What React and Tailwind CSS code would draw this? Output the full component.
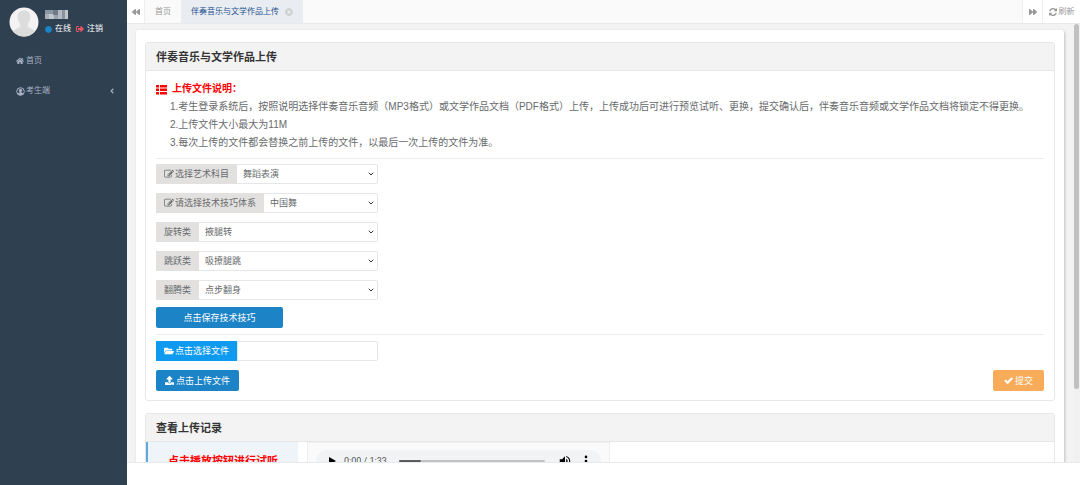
import React, { useState } from 'react';
import {
  FaAngleLeft,
  FaBackward,
  FaCircle,
  FaFolderOpen,
  FaForward,
  FaHome,
  FaSignOutAlt,
  FaTimesCircle,
  FaUpload,
} from 'react-icons/fa';
import { ChevronDown } from 'lucide-react';

const skillFields = [
  { id: 'subject', label: '选择艺术科目', icon: true, options: ['舞蹈表演'] },
  { id: 'system', label: '请选择技术技巧体系', icon: true, options: ['中国舞'] },
  { id: 'spin', label: '旋转类', options: ['掖腿转'] },
  { id: 'jump', label: '跳跃类', options: ['吸撩腿跳'] },
  { id: 'tumble', label: '翻腾类', options: ['点步翻身'] },
];

const EditIcon = () => (
  <svg viewBox="0 0 1792 1792" className="size-[10px]" fill="currentColor">
    <path d="M888 1184l116-116-152-152-116 116v56h96v96h56zm440-720q-16-16-33 1l-350 350q-17 17-1 33t33-1l350-350q17-17 1-33zm80 594v190q0 119-84.500 203.500t-203.500 84.500h-832q-119 0-203.500-84.500t-84.500-203.500v-832q0-119 84.500-203.500t203.500-84.500h832q63 0 117 25 15 7 18 23 3 17-9 29l-49 49q-14 14-32 8-23-6-45-6h-832q-66 0-113 47t-47 113v832q0 66 47 113t113 47h832q66 0 113-47t47-113v-126q0-13 9-22l64-64q15-15 35-7t20 29zm-96-738l288 288-672 672h-288v-288zm444 132l-92 92-288-288 92-92q28-28 68-28t68 28l152 152q28 28 28 68t-28 68z" />
  </svg>
);

const RefreshIcon = () => (
  <svg viewBox="128 128 1536 1536" className="size-2" fill="currentColor">
    <path d="M1639 1056q0 5-1 7-64 268-268 434.500t-478 166.500q-146 0-282.500-55t-243.500-157l-129 129q-19 19-45 19t-45-19-19-45v-448q0-26 19-45t45-19h448q26 0 45 19t19 45-19 45l-137 137q71 66 161 102t187 36q134 0 250-65t186-179q11-17 53-117 8-23 30-23h192q13 0 22.500 9.500t9.500 22.500zm25-800v448q0 26-19 45t-45 19h-448q-26 0-45-19t-19-45 19-45l138-138q-148-137-349-137-134 0-250 65t-186 179q-11 17-53 117-8 23-30 23h-199q-13 0-22.500-9.500t-9.500-22.500v-7q65-268 270-434.500t480-166.500q146 0 284 55.500t245 156.500l130-129q19-19 45-19t45 19 19 45z" />
  </svg>
);

const ListIcon = () => (
  <svg viewBox="0 0 11 11" className="size-[11px]" fill="currentColor">
    <rect x="0" y="1" width="3" height="2.500" />
    <rect x="4" y="1" width="7" height="2.500" />
    <rect x="0" y="4.500" width="3" height="2.500" />
    <rect x="4" y="4.500" width="7" height="2.500" />
    <rect x="0" y="8" width="3" height="2.500" />
    <rect x="4" y="8" width="7" height="2.500" />
  </svg>
);

const CheckIcon = () => (
  <svg viewBox="0 0 18 18" className="size-[9px]" fill="none" stroke="currentColor" strokeWidth="4.500">
    <path d="M2 8.500l5 5L16.500 4" />
  </svg>
);

const UserCircleIcon = () => (
  <svg viewBox="0 0 18 18" className="size-[9px]" fill="none" stroke="currentColor" strokeWidth="2">
    <circle cx="9" cy="9" r="7.6" />
    <circle cx="9" cy="7" r="3.400" fill="currentColor" stroke="none" />
    <path d="M3.6 14c.8-2.6 2.6-3.6 5.4-3.6s4.600 1 5.400 3.600C13 15.800 11 16.600 9 16.600S5 15.800 3.600 14z" fill="currentColor" stroke="none" />
  </svg>
);

const Avatar = () => (
  <svg viewBox="0 0 30 30" className="size-[30px] shrink-0" aria-label="avatar">
    <clipPath id="avatar-clip">
      <circle cx="15" cy="15" r="14.5" />
    </clipPath>
    <g clipPath="url(#avatar-clip)">
      <rect width="30" height="30" fill="#f4f2f3" />
      <path d="M15 3.500c4.200 0 6.400 2.800 6.200 6.600-.1 3-1 5.200-2.500 6.700v2.400c1 2.300 6.300 2.500 8.300 6.300V30H3v-4.500c2-3.800 7.300-4 8.300-6.300v-2.400c-1.500-1.500-2.400-3.700-2.500-6.700C8.600 6.300 10.800 3.500 15 3.500z" fill="#dcdcdc" />
    </g>
  </svg>
);

// Masked user name
const MaskedName = () => (
  <svg viewBox="0 0 24 9" className="h-[9px] w-6" shapeRendering="crispEdges">
    <rect x="0" y="0" width="8" height="4" fill="#8d97a4" />
    <rect x="0" y="4" width="4" height="5" fill="#a9b0ba" />
    <rect x="4" y="4" width="5" height="5" fill="#c3c8cf" />
    <rect x="8" y="0" width="5" height="5" fill="#6f7b89" />
    <rect x="9" y="5" width="5" height="4" fill="#99a2ad" />
    <rect x="13" y="0" width="4" height="9" fill="#b4bac3" />
    <rect x="17" y="0" width="3" height="9" fill="#8993a0" />
    <rect x="20" y="0" width="3" height="9" fill="#c0c5cc" />
  </svg>
);

const VolumeIcon = () => (
  <svg viewBox="0 0 24 24" className="size-[14px]" fill="currentColor">
    <path d="M3 9v6h4l5 5V4L7 9H3zm13.500 3c0-1.770-1.020-3.290-2.500-4.030v8.050c1.480-.73 2.500-2.250 2.500-4.020zM14 3.230v2.060c2.890.86 5 3.540 5 6.710s-2.110 5.850-5 6.710v2.060c4.010-.91 7-4.490 7-8.770s-2.990-7.860-7-8.770z" />
  </svg>
);

const MoreIcon = () => (
  <svg viewBox="0 0 24 24" className="size-[14px]" fill="currentColor">
    <circle cx="12" cy="5" r="2.300" />
    <circle cx="12" cy="12" r="2.300" />
    <circle cx="12" cy="19" r="2.300" />
  </svg>
);

const Sidebar = () => (
  <aside className="w-[127px] shrink-0 bg-[#2f4050] text-[8px] leading-3 text-[#a7b1c2]">
    <div className="flex gap-[6px] pt-[7px] pl-[9px]">
      <Avatar />
      <div className="flex flex-col gap-1 pt-[3px] text-white">
        <MaskedName />
        <div className="flex items-center gap-[5px]">
          <a href="#online" className="flex items-center gap-[3px]">
            <FaCircle className="size-[7px] text-[#1c84c6]" />
            在线
          </a>
          <a href="#logout" className="flex items-center gap-[3px]">
            <FaSignOutAlt className="size-2 text-[#ed5565]" />
            注销
          </a>
        </div>
      </div>
    </div>
    <nav className="mt-[18px] flex flex-col gap-[18px] px-4">
      <a href="#home" className="flex items-center gap-[2px]">
        <FaHome className="size-2" />
        首页
      </a>
      <a href="#student" className="flex items-center gap-px">
        <UserCircleIcon />
        考生端
        <FaAngleLeft className="-mr-[5px] ml-auto size-2" />
      </a>
    </nav>
  </aside>
);

const TabBar = () => (
  <div className="flex h-6 shrink-0 items-stretch border-b border-[#e7eaec] bg-[#fafafa] text-[8px] leading-3 text-[#999999]">
    <button aria-label="向左" className="flex w-[18px] items-center justify-center border-r border-[#eeeeee] bg-white">
      <FaBackward className="size-2" />
    </button>
    <a href="#home" className="flex items-center px-[10px]">首页</a>
    <a href="#upload" className="flex items-center gap-[6px] bg-[#e9edf2] px-[10px] text-[#23508e]">
      伴奏音乐与文学作品上传
      <FaTimesCircle className="size-2 text-[#cccccc]" />
    </a>
    <button aria-label="向右" className="ml-auto flex w-5 items-center justify-center border-l border-[#eeeeee] bg-white">
      <FaForward className="size-2" />
    </button>
    <button className="flex w-[38px] items-center justify-center gap-[2px] border-l border-[#eeeeee] bg-white">
      <RefreshIcon />
      刷新
    </button>
  </div>
);

const Card = ({ title, children }) => (
  <section className="rounded-[3px] border border-[#e7e7e7] bg-white">
    <h2 className="border-b border-[#e7e7e7] bg-[#f3f3f4] px-[10px] pt-[6px] pb-1 text-[11px] leading-[17px] font-bold text-[#333333]">
      {title}
    </h2>
    {children}
  </section>
);

const SelectField = ({ field }) => {
  const [value, setValue] = useState(field.options[0]);

  return (
    <div className="flex h-5 w-[222px]">
      <label htmlFor={field.id} className="flex shrink-0 items-center gap-px bg-[#e3e1e0] px-2">
        {field.icon && <EditIcon />}
        {field.label}
      </label>
      <div className="relative flex-1">
        <select
          id={field.id}
          value={value}
          onChange={(e) => setValue(e.target.value)}
          className="size-full appearance-none rounded-r-[2px] border border-l-0 border-[#e5e6e7] bg-white pl-[6px]"
        >
          {field.options.map((option) => (
            <option key={option}>{option}</option>
          ))}
        </select>
        <ChevronDown className="pointer-events-none absolute top-[6px] right-[3px] size-2 text-[#333333]" strokeWidth={3} />
      </div>
    </div>
  );
};

const UploadCard = () => (
  <Card title="伴奏音乐与文学作品上传">
    <div className="px-[10px] py-[9px]">
      <h3 className="flex items-center gap-[5px] text-[10px] leading-[18px] font-bold text-[#ff0000]">
        <ListIcon />
        上传文件说明：
      </h3>
      <div className="pl-[14px] text-[10px] leading-[18px]">
        <p>1.考生登录系统后，按照说明选择伴奏音乐音频（MP3格式）或文学作品文档（PDF格式）上传，上传成功后可进行预览试听、更换，提交确认后，伴奏音乐音频或文学作品文档将锁定不得更换。</p>
        <p>2.上传文件大小最大为11M</p>
        <p>3.每次上传的文件都会替换之前上传的文件，以最后一次上传的文件为准。</p>
      </div>
      <form className="mt-[6px] border-t border-[#eeeeee] pt-[5px]" onSubmit={(e) => e.preventDefault()}>
        <div className="flex flex-col gap-[9px]">
          {skillFields.map((field) => (
            <SelectField key={field.id} field={field} />
          ))}
        </div>
        <button className="mt-[7px] block h-[21px] w-[127px] rounded-[2px] bg-[#1c84c6] text-white">点击保存技术技巧</button>
      </form>
      <div className="mt-[6px] border-t border-[#eeeeee] pt-[6px]">
        <div className="flex h-5 w-[222px]">
          <button className="flex shrink-0 items-center gap-px bg-[#0e9aef] px-2 text-white">
            <FaFolderOpen className="size-[10px]" />
            点击选择文件
          </button>
          <input aria-label="文件名" readOnly className="min-w-0 flex-1 rounded-r-[2px] border border-[#e5e6e7] bg-white px-2" />
        </div>
        <div className="mt-[9px] flex justify-between">
          <button className="flex h-[21px] items-center gap-[2px] rounded-[2px] bg-[#1c84c6] px-[9px] text-white">
            <FaUpload className="size-[9px]" />
            点击上传文件
          </button>
          <button className="flex h-[21px] items-center gap-[2px] rounded-[2px] bg-[#f8ac59] px-[11px] text-white">
            <CheckIcon />
            提交
          </button>
        </div>
      </div>
    </div>
  </Card>
);

const AudioPlayer = () => (
  <div className="w-[303px] border border-[#eeeeee] bg-[#fafafa] px-2 py-[7px]">
    <div className="flex h-[22px] items-center rounded-full bg-[#f1f3f4] px-[12px] text-black">
      <button aria-label="播放">
        <svg viewBox="0 0 8 8" className="size-2" fill="currentColor">
          <path d="M1 0l7 4-7 4z" />
        </svg>
      </button>
      <span className="ml-2 w-[55px] font-[Roboto,sans-serif] text-[9px] leading-3 text-[#555555]">0:00 / 1:33</span>
      <div className="flex h-[2px] flex-1 rounded-full bg-[#c3c3c3]">
        <div className="w-[15%] rounded-full bg-[#5c5c5c]" />
      </div>
      <button aria-label="音量" className="ml-[13px]">
        <VolumeIcon />
      </button>
      <button aria-label="更多" className="ml-[7px] -mr-1">
        <MoreIcon />
      </button>
    </div>
  </div>
);

const RecordCard = () => (
  <Card title="查看上传记录">
    <div className="flex gap-[9px]">
      <div className="w-[152px] border-l-2 border-[#5aaae0] bg-[#eff4f9] py-[11px] text-center text-[11px] leading-[17px] font-bold text-[#ff0000]">
        点击播放按钮进行试听
      </div>
      <AudioPlayer />
    </div>
  </Card>
);

export default function App() {
  return (
    <div className="flex h-screen overflow-hidden bg-white font-['Liberation_Sans','Noto_Sans_CJK_SC',sans-serif] text-[9px] leading-3 text-[#676a6c]">
      <Sidebar />
      <div className="flex min-w-0 flex-1 flex-col">
        <TabBar />
        <div className="flex min-h-0 flex-1 bg-[#f3f3f4]">
          <main className="min-w-0 flex-1 overflow-hidden pt-[6px] pr-[10px] pl-[9px]">
            <div className="flex flex-col gap-3 rounded-[3px] bg-white px-[9px] pt-3 pb-5 shadow-[1px_1px_3px_rgba(0,0,0,0.2)]">
              <UploadCard />
              <RecordCard />
            </div>
          </main>
          <div className="w-[6px] shrink-0 bg-[#f1f1f1]">
            <div className="h-5/6 w-[5px] rounded-full bg-[#c1c1c1]" />
          </div>
        </div>
        <footer className="h-[23px] shrink-0 border-t border-[#e7eaec] bg-white" />
      </div>
    </div>
  );
}
